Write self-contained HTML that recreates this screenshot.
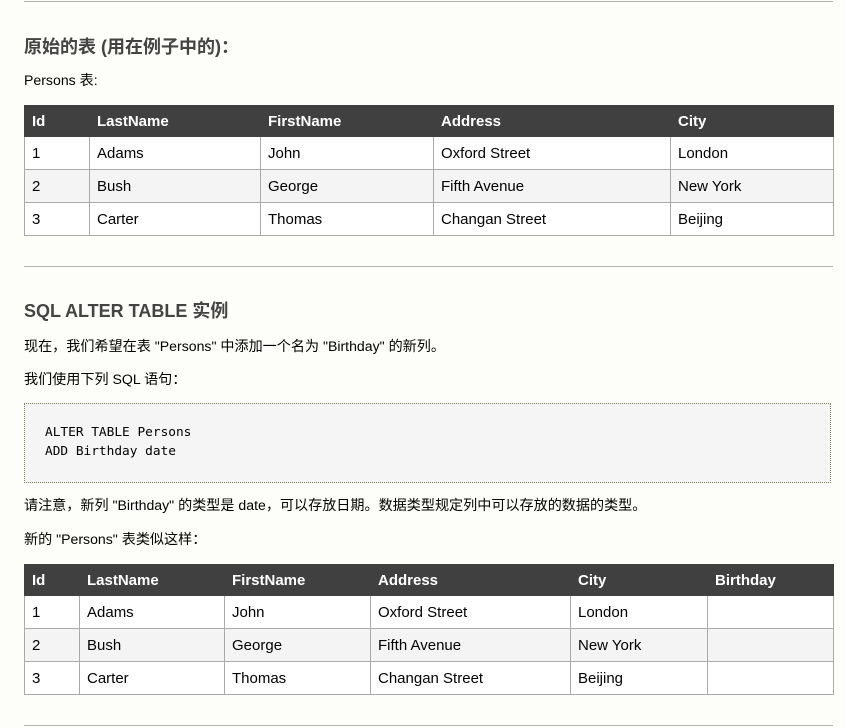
<!DOCTYPE html>
<html><head><meta charset="utf-8"><style>
body{margin:0;width:845px;height:728px;background:#fdfdf9;font-family:"Liberation Sans","Noto Sans CJK SC",sans-serif;color:#000;position:relative;overflow:hidden;font-size:14.1px}
.hr{position:absolute;left:24px;width:809px;height:1px;background:#b0b0b0}
.a{position:absolute;left:24px;white-space:nowrap}
h2{margin:0;font-size:18px;font-weight:bold;color:#444;position:absolute;left:24px;white-space:nowrap}
table{position:absolute;left:24px;width:810px;border-collapse:collapse;table-layout:fixed;font-size:15px}
th{background:#404040;color:#fff;text-align:left;height:31px;padding:0 0 0 7px;border:1px solid #404040;box-sizing:border-box}
td{border:1px solid #aaa;height:33px;padding:0 0 0 7px;background:#fff;box-sizing:border-box}
tr.e td{background:#f4f4f4}
pre{position:absolute;left:24px;top:403px;width:805px;height:78px;margin:0;background:#f5f5f5;border:1px dotted #7a8450;font-family:"DejaVu Sans Mono","Liberation Mono",monospace;font-size:12.8px;line-height:19px;box-sizing:content-box}
pre span{position:absolute;left:20px;top:19px}
</style></head><body>
<div class="hr" style="top:1px"></div>
<h2 style="top:33px">原始的表 (用在例子中的)：</h2>
<div class="a" style="top:70px">Persons 表:</div>
<table style="top:105px">
<colgroup><col style="width:65px"><col style="width:171px"><col style="width:173px"><col style="width:237px"><col></colgroup>
<tr><th>Id</th><th>LastName</th><th>FirstName</th><th>Address</th><th>City</th></tr>
<tr><td>1</td><td>Adams</td><td>John</td><td>Oxford Street</td><td>London</td></tr>
<tr class="e"><td>2</td><td>Bush</td><td>George</td><td>Fifth Avenue</td><td>New York</td></tr>
<tr><td>3</td><td>Carter</td><td>Thomas</td><td>Changan Street</td><td>Beijing</td></tr>
</table>
<div class="hr" style="top:266px"></div>
<h2 style="top:297px">SQL ALTER TABLE 实例</h2>
<div class="a" style="top:336px">现在，我们希望在表 "Persons" 中添加一个名为 "Birthday" 的新列。</div>
<div class="a" style="top:369px">我们使用下列 SQL 语句：</div>
<pre><span>ALTER TABLE Persons
ADD Birthday date</span></pre>
<div class="a" style="top:495px">请注意，新列 "Birthday" 的类型是 date，可以存放日期。数据类型规定列中可以存放的数据的类型。</div>
<div class="a" style="top:529px">新的 "Persons" 表类似这样：</div>
<table style="top:564px">
<colgroup><col style="width:55px"><col style="width:145px"><col style="width:146px"><col style="width:200px"><col style="width:137px"><col></colgroup>
<tr><th>Id</th><th>LastName</th><th>FirstName</th><th>Address</th><th>City</th><th>Birthday</th></tr>
<tr><td>1</td><td>Adams</td><td>John</td><td>Oxford Street</td><td>London</td><td></td></tr>
<tr class="e"><td>2</td><td>Bush</td><td>George</td><td>Fifth Avenue</td><td>New York</td><td></td></tr>
<tr><td>3</td><td>Carter</td><td>Thomas</td><td>Changan Street</td><td>Beijing</td><td></td></tr>
</table>
<div class="hr" style="top:725px"></div>
</body></html>
